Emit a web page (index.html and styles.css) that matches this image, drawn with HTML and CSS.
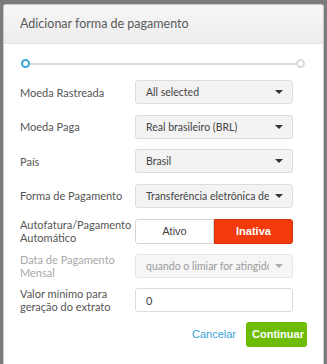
FILE: index.html
```html
<!DOCTYPE html>
<html lang="pt">
<head>
  <meta charset="UTF-8" />
  <title>Adicionar forma de pagamento</title>
  <link rel="stylesheet" href="styles.css">
</head>
<body>
  <div class="modal">
    <div class="modal-header">Adicionar forma de pagamento</div>

    <div class="modal-body">
      <div class="steps">
        <span class="dot active"></span>
        <span class="track"></span>
        <span class="dot"></span>
      </div>

      <div class="row">
        <label>Moeda Rastreada</label>
        <div class="select"><span class="value">All selected</span><span class="caret"></span></div>
      </div>

      <div class="row">
        <label>Moeda Paga</label>
        <div class="select"><span class="value">Real brasileiro (BRL)</span><span class="caret"></span></div>
      </div>

      <div class="row">
        <label>País</label>
        <div class="select"><span class="value">Brasil</span><span class="caret"></span></div>
      </div>

      <div class="row">
        <label>Forma de Pagamento</label>
        <div class="select"><span class="value">Transferência eletrônica de</span><span class="caret"></span></div>
      </div>

      <div class="row">
        <label>Autofatura/Pagamento Automático</label>
        <div class="toggle">
          <button class="opt">Ativo</button>
          <button class="opt on">Inativa</button>
        </div>
      </div>

      <div class="row disabled">
        <label>Data de Pagamento Mensal</label>
        <div class="select"><span class="value">quando o limiar for atingido</span><span class="caret"></span></div>
      </div>

      <div class="row">
        <label>Valor mínimo para geração do extrato</label>
        <input type="text" class="field" value="0" />
      </div>

      <div class="actions">
        <a class="cancel">Cancelar</a>
        <button class="continue">Continuar</button>
      </div>
    </div>
  </div>
</body>
</html>
```

FILE: styles.css
```css
body {
  margin: 0;
  background: #7b7b7b;
  font-family: Lato, 'Liberation Sans', sans-serif;
  height: 364px;
  overflow: hidden;
}

.modal {
  margin: 4px 3px 0;
  height: 360px;
  background: #fff;
  border: 1px solid #c9c9c9;
  border-bottom: none;
  border-radius: 3px 3px 0 0;
  box-sizing: border-box;
}

.modal-header {
  height: 38px;
  line-height: 38px;
  padding-left: 16px;
  font-size: 12.5px;
  color: #5a5a5a;
  background: linear-gradient(#f7f7f7, #ececec);
  border-bottom: 1px solid #e2e2e2;
  border-radius: 3px 3px 0 0;
}

.modal-body {
  padding: 15px 16px 0;
}

.steps {
  display: flex;
  align-items: center;
  margin: 0 2px 12px 1px;
}

.dot {
  width: 5px;
  height: 5px;
  border: 2px solid #d8d8d8;
  border-radius: 50%;
  flex: none;
}

.dot.active {
  border-color: #3ba6d6;
}

.track {
  flex: 1;
  height: 2px;
  background: #dedede;
}

.row {
  display: grid;
  grid-template-columns: 115px 158px;
  align-items: center;
  height: 24px;
  margin-bottom: 10.5px;
}

label {
  font-size: 11px;
  line-height: 13px;
  color: #555;
  padding-right: 8px;
}

.select {
  display: flex;
  align-items: center;
  gap: 6px;
  height: 24px;
  box-sizing: border-box;
  padding: 0 9px 0 10px;
  border: 1px solid #dcdcdc;
  border-radius: 3px;
  background: #f3f3f3;
  font-size: 10.5px;
  color: #444;
}

.value {
  flex: 1;
  white-space: nowrap;
  overflow: hidden;
}

.caret {
  flex: none;
  border-left: 4px solid transparent;
  border-right: 4px solid transparent;
  border-top: 4px solid #333;
}

.disabled label {
  color: #a8a8a8;
}

.disabled .select {
  color: #9a9a9a;
  background: #f6f6f6;
  border-color: #e6e6e6;
}

.disabled .caret {
  border-top-color: #aaa;
}

.toggle {
  display: flex;
  height: 25px;
}

.opt {
  flex: 1;
  margin: 0;
  border: 1px solid #d6d6d6;
  background: #fff;
  font-family: 'Liberation Sans', sans-serif;
  font-size: 11px;
  color: #444;
  border-radius: 3px 0 0 3px;
}

.opt.on {
  background: #f23a0c;
  border-color: #d83008;
  color: #fff;
  font-weight: bold;
  border-radius: 0 3px 3px 0;
}

.field {
  height: 24px;
  box-sizing: border-box;
  margin: 0;
  padding: 0 10px;
  border: 1px solid #dcdcdc;
  border-radius: 3px;
  font-family: inherit;
  font-size: 11px;
  color: #444;
}

.actions {
  display: flex;
  justify-content: flex-end;
  align-items: center;
  gap: 10px;
  margin-top: 4px;
}

.cancel {
  font-family: 'Liberation Sans', sans-serif;
  font-size: 11px;
  color: #3aa2d8;
}

.continue {
  width: 61px;
  height: 25px;
  border: none;
  border-radius: 3px;
  background: #6dbd06;
  color: #fff;
  font-family: 'Liberation Sans', sans-serif;
  font-size: 11px;
  font-weight: bold;
}
```
